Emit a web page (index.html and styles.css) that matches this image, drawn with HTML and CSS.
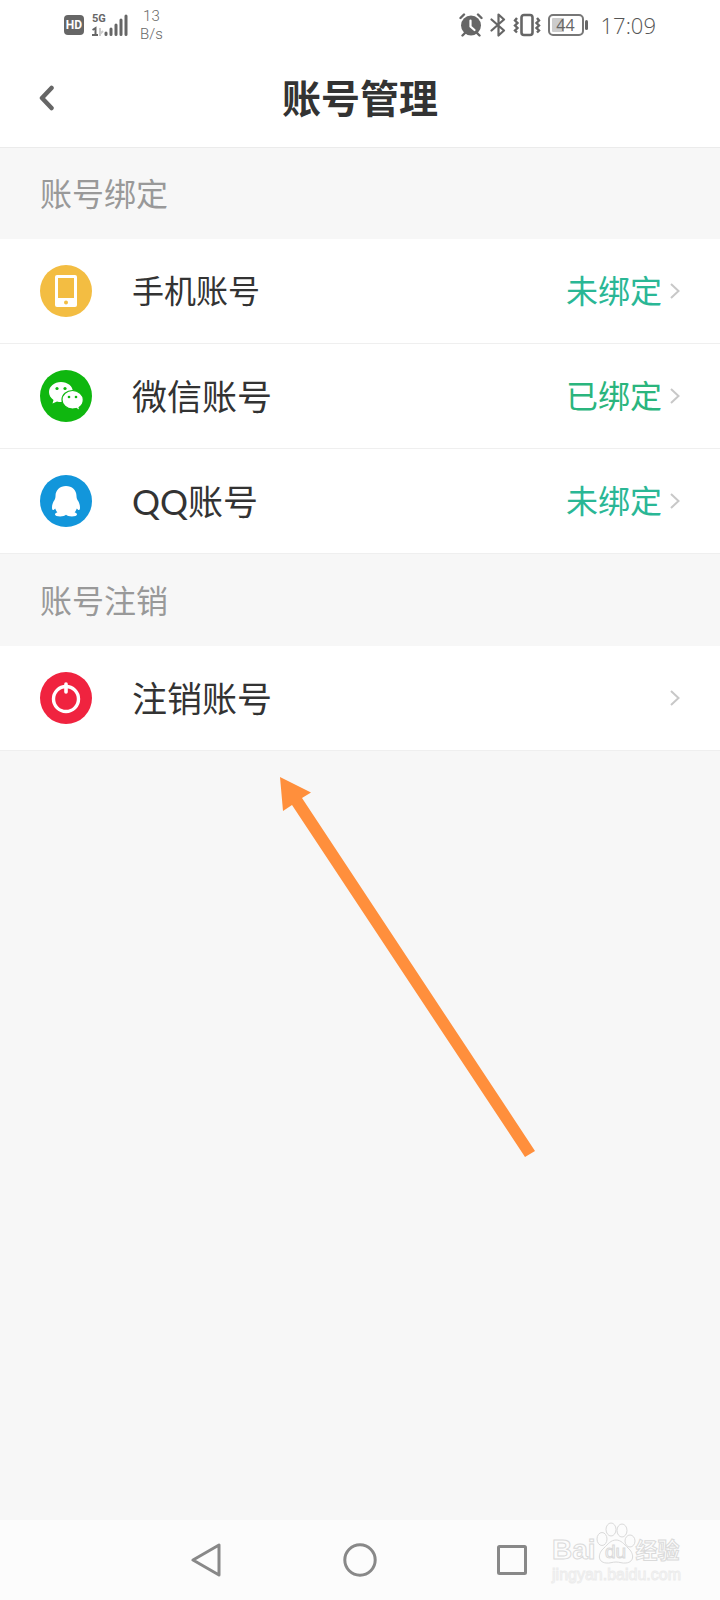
FILE: index.html
```html
<!DOCTYPE html>
<html lang="zh-CN">
<head>
<meta charset="utf-8">
<meta name="viewport" content="width=device-width, initial-scale=1">
<title>账号管理</title>
<link rel="stylesheet" href="styles.css">
</head>
<body>
<div class="screen">
  <div class="status">
    <div class="status-left">
      <span class="hd">HD</span>
      <div class="signal">
        <span class="gen">5G</span>
        <svg width="36" height="24" viewBox="0 0 36 24" aria-hidden="true">
          <path d="M0.500 17l3-2v7M0 22h6" fill="none" stroke="#666" stroke-width="2"/>
          <path d="M8 15v8M8 21l3-3" fill="none" stroke="#ccc" stroke-width="2"/>
          <path d="M14 20v1.500M19 16v5.500M24 12v9.500M29 7v14.500M34 3v18.500" stroke="#666" stroke-width="3" stroke-linecap="round"/>
        </svg>
      </div>
      <div class="speed"><span>13</span><span>B/s</span></div>
    </div>
    <div class="status-right">
      <svg width="24" height="24" viewBox="0 0 24 24" aria-hidden="true">
        <circle cx="12" cy="12.500" r="10" fill="#666"/>
        <path d="M1.500 5l3.500-3.500M22.500 5L19 1.500M6 20l-2.500 2.500M18 20l2.500 2.500" stroke="#666" stroke-width="2.400" stroke-linecap="round"/>
        <path d="M11.500 7.500v6l4 3.500" fill="none" stroke="#fff" stroke-width="2.200" stroke-linecap="round"/>
      </svg>
      <svg width="16" height="24" viewBox="0 0 16 24" aria-hidden="true">
        <path d="M1.500 6.500L14 17.500l-5.500 5V1.500L14 6.500 1.500 17.500" fill="none" stroke="#666" stroke-width="2.200" stroke-linejoin="round" stroke-linecap="round"/>
      </svg>
      <svg width="28" height="24" viewBox="0 0 28 24" aria-hidden="true">
        <rect x="8.500" y="2" width="11" height="20" rx="2.500" fill="none" stroke="#666" stroke-width="2.600"/>
        <path d="M4 5l-2 2.500 2.500 2.500-2.500 2.500 2.500 2.500-2.500 2.500 2 2M24 5l2 2.500-2.500 2.500 2.500 2.500-2.500 2.500 2.500 2.500-2 2" fill="none" stroke="#666" stroke-width="2.400"/>
      </svg>
      <div class="battery"><span>44</span></div>
      <time class="clock">17:09</time>
    </div>
  </div>

  <header class="header">
    <button class="back" type="button" aria-label="返回">
      <svg width="16" height="26" viewBox="0 0 16 26" aria-hidden="true"><path d="M12.500 3L3 13l9.500 10" fill="none" stroke="#666" stroke-width="4.500" stroke-linecap="round" stroke-linejoin="round"/></svg>
    </button>
    <h1 class="title">账号管理</h1>
  </header>

  <main class="content">
    <h2 class="section">账号绑定</h2>
    <ul class="list">
      <li><a class="row" href="#phone">
        <svg class="icon" viewBox="0 0 52 52" aria-hidden="true">
          <circle cx="26" cy="26" r="26" fill="#f3bd42"/>
          <rect x="15" y="10" width="22" height="32" rx="2" fill="#fff"/>
          <rect x="18" y="13" width="16" height="20" fill="#f3bd42"/>
          <circle cx="26" cy="37.500" r="2" fill="#f3bd42"/>
        </svg>
        <span class="name">手机账号</span><span class="state">未绑定</span>
        <svg class="chevron" viewBox="0 0 10 16" aria-hidden="true"><path d="M1 1l7.500 7L1 15"/></svg>
      </a></li>
      <li><a class="row" href="#wechat">
        <svg class="icon" viewBox="0 0 52 52" aria-hidden="true">
          <circle cx="26" cy="26" r="26" fill="#0fb70f"/>
          <path d="M21 12c-6.800 0-12 4.500-12 10 0 3.300 1.700 6 4.500 8l-1 3.500 4.500-2c1.300.4 2.600.500 4 .500 6.600 0 12-4.300 12-10s-5.400-10-12-10z" fill="#fff"/>
          <path d="M32.500 20.500C26.500 20.500 22 24.700 22 29.700s4.500 9.300 10.500 9.300c1.300 0 2.500-.2 3.600-.500l4 2.200-1-3.200c2.400-1.600 4.200-4.400 4.200-7.800 0-5-4.800-9.200-10.800-9.200z" fill="#fff" stroke="#0fb70f" stroke-width="1.200"/>
          <g fill="#0fb70f"><circle cx="17" cy="18.500" r="1.600"/><circle cx="25" cy="18.500" r="1.600"/><circle cx="29" cy="27" r="1.300"/><circle cx="36" cy="27" r="1.300"/></g>
        </svg>
        <span class="name large">微信账号</span><span class="state bound">已绑定</span>
        <svg class="chevron" viewBox="0 0 10 16" aria-hidden="true"><path d="M1 1l7.500 7L1 15"/></svg>
      </a></li>
      <li><a class="row" href="#qq">
        <svg class="icon" viewBox="0 0 52 52" aria-hidden="true">
          <circle cx="26" cy="26" r="26" fill="#1296db"/>
          <path d="M26 11c-6 0-10.500 4-10.500 10 0 1.500-.3 2.500-1 4-1.700 2.300-2.500 5-2.500 7.500 0 1.800.5 2.500 1.200 2.500.6 0 1.400-.7 2-1.500.5 1.600 1.100 2.700 2.200 3.700-1.500.500-2.400 1.300-2.400 2.200 0 1.300 2.300 2 5.200 2 2.600 0 4.500-.7 5.800-1.700 1.300 1 3.200 1.700 5.800 1.700 2.900 0 5.200-.7 5.200-2 0-.9-.9-1.700-2.400-2.200 1.100-1 1.700-2.100 2.200-3.700.6.800 1.400 1.500 2 1.500.7 0 1.200-.7 1.200-2.500 0-2.500-.8-5.200-2.500-7.500-.7-1.500-1-2.500-1-4 0-6-4.500-10-10.500-10z" fill="#fff"/>
        </svg>
        <span class="name large">QQ账号</span><span class="state">未绑定</span>
        <svg class="chevron" viewBox="0 0 10 16" aria-hidden="true"><path d="M1 1l7.500 7L1 15"/></svg>
      </a></li>
    </ul>
    <h2 class="section">账号注销</h2>
    <ul class="list">
      <li><a class="row" href="#close">
        <svg class="icon" viewBox="0 0 52 52" aria-hidden="true">
          <circle cx="26" cy="26" r="26" fill="#f0233f"/>
          <circle cx="26" cy="27" r="12.500" fill="none" stroke="#fff" stroke-width="3.400"/>
          <path d="M26 12v8" stroke="#fff" stroke-width="3.600" stroke-linecap="round"/>
        </svg>
        <span class="name large">注销账号</span>
        <svg class="chevron" viewBox="0 0 10 16" aria-hidden="true"><path d="M1 1l7.500 7L1 15"/></svg>
      </a></li>
    </ul>
    <div class="blank">
      <svg class="arrow" width="256" height="382" viewBox="0 0 256 382" aria-hidden="true"><path d="M0 0L31 15.500 22 21 255 374 245 380 12 28 3 34z" fill="#ff8f3c"/></svg>
    </div>
  </main>

  <nav class="nav" aria-label="系统导航">
    <button type="button" aria-label="后退"><svg width="34" height="36" viewBox="0 0 34 36" aria-hidden="true"><path d="M28 3v30L2 18z"/></svg></button>
    <button type="button" aria-label="主页"><svg width="34" height="36" viewBox="0 0 34 36" aria-hidden="true"><circle cx="17" cy="18" r="15.200"/></svg></button>
    <button type="button" aria-label="最近任务"><svg width="34" height="36" viewBox="0 0 34 36" aria-hidden="true"><rect x="3.500" y="4.500" width="27" height="27" rx="1"/></svg></button>
    <div class="mark">
      <div class="mark-top">
        <span class="mark-word">Bai</span>
        <span class="paw"><svg width="40" height="42" viewBox="0 0 40 42" aria-hidden="true">
          <ellipse cx="6" cy="17" rx="5" ry="6.500"/><ellipse cx="15" cy="7.500" rx="5" ry="6.500"/><ellipse cx="26" cy="8.500" rx="5" ry="6.500"/><ellipse cx="34" cy="19" rx="5" ry="6"/>
          <path d="M20 18c-5 0-8 4-12 8-6 5-7 14 2 15 4 .500 6-1 10-1s6 1.500 10 1c9-1 8-10 2-15-4-4-7-8-12-8z"/>
        </svg><span>du</span></span>
        <span class="mark-cjk">经验</span>
      </div>
      <div class="mark-url">jingyan.baidu.com</div>
    </div>
  </nav>
</div>
</body>
</html>
```

FILE: styles.css
```css
* {
  box-sizing: border-box;
}

body {
  margin: 0;
  color: #333;
  background: #f7f7f7;
  font-family: Lato, "Noto Sans CJK SC", sans-serif;
}

button {
  padding: 0;
  border: 0;
  background: none;
}

svg {
  display: block;
  flex: none;
}

.screen {
  display: flex;
  flex-direction: column;
  min-height: 100vh;
}

.status {
  display: flex;
  justify-content: space-between;
  align-items: center;
  height: 48px;
  padding: 1px 64px 0;
  color: #666;
  background: #fff;
}

.status-left,
.status-right {
  display: flex;
  align-items: center;
}

.status-left {
  gap: 8px;
}

.status-right {
  gap: 7px;
}

.hd {
  width: 20px;
  height: 20px;
  border-radius: 4px;
  color: #fff;
  background: #666;
  font: bold 12px/20px Roboto, sans-serif;
  text-align: center;
}

.signal {
  position: relative;
}

.gen {
  position: absolute;
  top: 0;
  left: 0;
  font: bold 11px/12px Roboto, sans-serif;
}

.speed {
  display: flex;
  flex-direction: column;
  align-items: center;
  margin-left: 4px;
  font: 300 15px/18px Roboto, sans-serif;
}

.battery {
  position: relative;
  width: 36px;
  height: 22px;
  margin-right: 10px;
  border: 2px solid #777;
  border-radius: 5px;
  background: linear-gradient(to right, #ccc 45%, #fff 45%);
  background-clip: content-box;
  padding: 2px;
  font: 16px/14px "Open Sans", sans-serif;
  text-align: center;
}

.battery::after {
  content: "";
  position: absolute;
  top: 4px;
  right: -6px;
  width: 3px;
  height: 10px;
  border-radius: 2px;
  background: #666;
}

.clock {
  font: 300 22px/24px "Open Sans", sans-serif;
  color: #555;
}

.header {
  display: grid;
  grid-template-columns: 1fr auto 1fr;
  align-items: center;
  height: 100px;
  padding: 0 39px;
  border-bottom: 1px solid #ebebeb;
  background: #fff;
}

.back {
  justify-self: start;
}

.title {
  margin: 0;
  font-size: 39px;
  line-height: 48px;
  font-weight: bold;
}

.content {
  flex: 1;
  display: flex;
  flex-direction: column;
}

.section {
  margin: 0;
  padding: 24px 40px;
  color: #999;
  font-size: 32px;
  line-height: 43px;
  font-weight: normal;
}

.list + .section {
  padding-top: 25px;
}

.list {
  margin: 0;
  padding: 0;
  list-style: none;
  background: #fff;
}

.row {
  display: flex;
  align-items: center;
  height: 105px;
  padding: 0 40px;
  border-bottom: 1px solid #efefef;
  color: #333;
  text-decoration: none;
}

.icon {
  width: 52px;
  height: 52px;
  margin-right: 40px;
}

.name {
  flex: 1;
  font-size: 32px;
  line-height: 48px;
}

.large {
  font-size: 35px;
}

.state {
  margin-right: 8px;
  color: #2ab795;
  font-size: 32px;
  line-height: 48px;
}

.bound {
  color: #2ab57d;
}

.chevron {
  width: 10px;
  height: 16px;
  fill: none;
  stroke: #c8c8c8;
  stroke-width: 2;
}

.blank {
  position: relative;
  flex: 1;
}

.arrow {
  position: absolute;
  top: 26px;
  left: 280px;
}

.nav {
  position: relative;
  display: flex;
  justify-content: center;
  align-items: center;
  gap: 118px;
  height: 80px;
  background: #fcfcfc;
}

.nav button svg {
  fill: none;
  stroke: #888;
  stroke-width: 3;
  stroke-linejoin: round;
}

.mark {
  position: absolute;
  right: 39px;
  bottom: 16px;
  color: #fcfcfc;
  font-family: "Liberation Sans", "Noto Sans CJK SC", sans-serif;
  -webkit-text-stroke: 1px #dadada;
}

.mark-top {
  display: flex;
  align-items: flex-end;
}

.mark-word {
  font-size: 28px;
  line-height: 28px;
  font-weight: bold;
}

.paw {
  position: relative;
}

.paw svg {
  fill: #fcfcfc;
  stroke: #dadada;
}

.paw span {
  position: absolute;
  right: 0;
  bottom: 2px;
  left: 0;
  font-size: 19px;
  line-height: 20px;
  text-align: center;
}

.mark-cjk {
  font-size: 22px;
  line-height: 26px;
  font-weight: bold;
}

.mark-url {
  margin-top: 2px;
  font-size: 16px;
  line-height: 18px;
  color: #fcfcfc;
  -webkit-text-stroke: 1px #ececec;
}
```
